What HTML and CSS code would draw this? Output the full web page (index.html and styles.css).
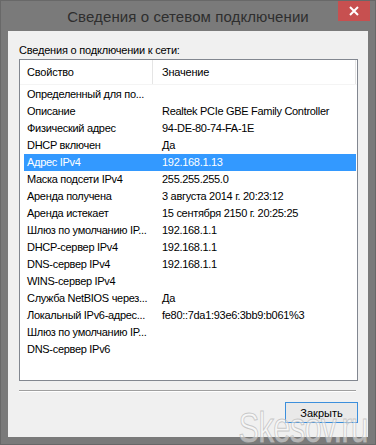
FILE: index.html
```html
<!DOCTYPE html>
<html lang="ru">
<head>
  <meta charset="UTF-8" />
  <title>Сведения о сетевом подключении</title>
  <link rel="stylesheet" href="styles.css">
</head>
<body>

  <div class="window">
    <div class="titlebar">
      <span class="title">Сведения о сетевом подключении</span>
      <button class="close-btn">
        <svg width="10" height="10" viewBox="0 0 10 10">
          <path d="M1 1 L9 9 M9 1 L1 9" stroke="#fff" stroke-width="2"/>
        </svg>
      </button>
    </div>

    <div class="client">
      <div class="caption">Сведения о подключении к сети:</div>

      <div class="list">
        <div class="list-head">
          <div class="head-cell first">Свойство</div>
          <div class="head-cell second">Значение</div>
        </div>
        <div class="row"><span class="cell-name">Определенный для по...</span><span class="cell-value"></span></div>
        <div class="row"><span class="cell-name">Описание</span><span class="cell-value">Realtek PCIe GBE Family Controller</span></div>
        <div class="row"><span class="cell-name">Физический адрес</span><span class="cell-value">94-DE-80-74-FA-1E</span></div>
        <div class="row"><span class="cell-name">DHCP включен</span><span class="cell-value">Да</span></div>
        <div class="row selected"><span class="cell-name">Адрес IPv4</span><span class="cell-value">192.168.1.13</span></div>
        <div class="row"><span class="cell-name">Маска подсети IPv4</span><span class="cell-value">255.255.255.0</span></div>
        <div class="row"><span class="cell-name">Аренда получена</span><span class="cell-value">3 августа 2014 г. 20:23:12</span></div>
        <div class="row"><span class="cell-name">Аренда истекает</span><span class="cell-value">15 сентября 2150 г. 20:25:25</span></div>
        <div class="row"><span class="cell-name">Шлюз по умолчанию IP...</span><span class="cell-value">192.168.1.1</span></div>
        <div class="row"><span class="cell-name">DHCP-сервер IPv4</span><span class="cell-value">192.168.1.1</span></div>
        <div class="row"><span class="cell-name">DNS-сервер IPv4</span><span class="cell-value">192.168.1.1</span></div>
        <div class="row"><span class="cell-name">WINS-сервер IPv4</span><span class="cell-value"></span></div>
        <div class="row"><span class="cell-name">Служба NetBIOS через...</span><span class="cell-value">Да</span></div>
        <div class="row"><span class="cell-name">Локальный IPv6-адрес...</span><span class="cell-value">fe80::7da1:93e6:3bb9:b061%3</span></div>
        <div class="row"><span class="cell-name">Шлюз по умолчанию IP...</span><span class="cell-value"></span></div>
        <div class="row"><span class="cell-name">DNS-сервер IPv6</span><span class="cell-value"></span></div>
      </div>

      <div class="separator"></div>

      <div class="actions">
        <button class="close-dialog">Закрыть</button>
      </div>
    </div>

    <!-- watermark over the dialog -->
    <div class="watermark">Skesov.ru</div>
  </div>

</body>
</html>
```

FILE: styles.css
```css
* {
  box-sizing: border-box;
}
body {
  margin: 0;
  padding: 0;
  background: #7a7a7a;
  font-family: 'Liberation Sans', Arial, sans-serif;
  font-size: 11px;
  color: #000;
}
.window {
  width: 376px;
  height: 445px;
  border: 1px solid #686868;
  background: #7a7a7a;
  display: flex;
  flex-direction: column;
  position: relative;
  overflow: hidden;
}
.titlebar {
  height: 30px;
  display: flex;
  justify-content: center;
  align-items: center;
  position: relative;
}
.title {
  font-size: 15px;
  color: #2e2e2e;
  letter-spacing: 0.1px;
  padding-top: 1px;
}
.close-btn {
  position: absolute;
  top: -1px;
  right: 5px;
  width: 32px;
  height: 21px;
  border: none;
  padding: 0;
  background: #c75050;
  display: flex;
  justify-content: center;
  align-items: center;
}
.client {
  flex: 1;
  margin: 0 7px 7px;
  background: #f0f0f0;
  padding: 12px 10px 0 11px;
  display: flex;
  flex-direction: column;
}
.caption {
  line-height: 14px;
  height: 14px;
  margin-bottom: 2px;
  letter-spacing: -0.2px;
}
.list {
  height: 322px;
  border: 1px solid #828790;
  background: #fff;
}
.list-head {
  display: flex;
  height: 25px;
  margin-bottom: 1px;
  border-bottom: 1px solid #f4f4f4;
}
.head-cell {
  line-height: 24px;
  border-right: 1px solid #e5e5e5;
  letter-spacing: -0.2px;
}
.head-cell.first {
  width: 133px;
  padding-left: 7px;
}
.head-cell.second {
  width: 203px;
  padding-left: 9px;
}
.row {
  display: flex;
  height: 17px;
  line-height: 17px;
  margin-left: 4px;
  width: 332px;
  letter-spacing: -0.3px;
  white-space: nowrap;
}
.row.selected {
  background: #3399ff;
  color: #fff;
}
.cell-name {
  width: 129px;
  padding-left: 3px;
  overflow: hidden;
}
.cell-value {
  padding-left: 9px;
}
.separator {
  margin-top: 9px;
  width: 337px;
  height: 2px;
  border-top: 1px solid #a0a0a0;
  border-bottom: 1px solid #fff;
}
.actions {
  display: flex;
  justify-content: flex-end;
  margin-top: 10px;
}
.close-dialog {
  width: 73px;
  height: 21px;
  border: 1px solid #3c8fdc;
  background: #e9e9e9;
  font-family: 'Liberation Sans', Arial, sans-serif;
  font-size: 11px;
  color: #000;
  padding: 0;
}
.watermark {
  position: absolute;
  right: 7px;
  bottom: -8px;
  font-size: 42px;
  font-family: 'Liberation Sans', Arial, sans-serif;
  color: rgba(255, 255, 255, 0.45);
  -webkit-text-stroke: 1px rgba(185, 185, 185, 0.75);
  transform: scaleX(0.74);
  transform-origin: right bottom;
  letter-spacing: -1px;
  pointer-events: none;
}
```
